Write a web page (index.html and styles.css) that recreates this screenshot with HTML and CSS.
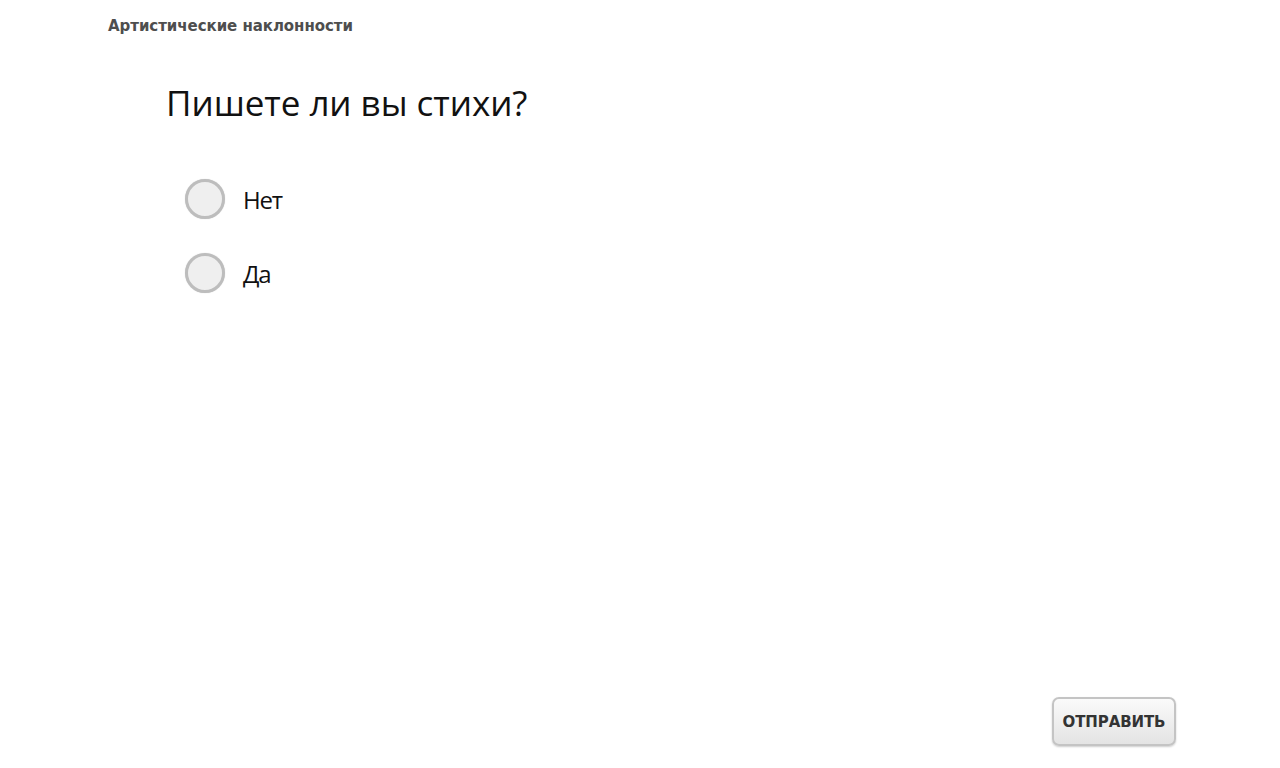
FILE: index.html
```html
<!DOCTYPE html>
<html lang="ru">
<head>
<meta charset="utf-8">
<link rel="stylesheet" href="styles.css">
</head>
<body>
<div class="page">
  <div class="section-title">Артистические наклонности</div>
  <div class="question">
    <h1 class="question-text">Пишете ли вы стихи?</h1>
    <div class="options">
      <label class="option"><span class="radio"></span><span class="option-text">Нет</span></label>
      <label class="option"><span class="radio"></span><span class="option-text">Да</span></label>
    </div>
  </div>
  <div class="footer">
    <button class="submit">ОТПРАВИТЬ</button>
  </div>
</div>
</body>
</html>
```
FILE: styles.css
```css
html, body {
  margin: 0;
  padding: 0;
  background: #fff;
}
.page {
  width: 1280px;
  height: 768px;
  display: flex;
  flex-direction: column;
  box-sizing: border-box;
  padding: 16px 104px 22px 108px;
}
.section-title {
  font-family: "DejaVu Sans", Verdana, sans-serif;
  font-weight: bold;
  font-size: 15px;
  letter-spacing: -0.05px;
  color: #4e4e4e;
  line-height: 20px;
}
.question {
  padding-left: 58px;
  padding-top: 45px;
}
.question-text {
  margin: 0;
  font-family: "Open Sans", sans-serif;
  font-weight: normal;
  font-size: 35px;
  letter-spacing: -0.05px;
  color: #111;
  line-height: 44px;
}
.options {
  display: flex;
  flex-direction: column;
  gap: 34px;
  padding-top: 54px;
  padding-left: 19px;
}
.option {
  display: flex;
  align-items: center;
  gap: 18px;
}
.radio {
  width: 34px;
  height: 34px;
  border-radius: 50%;
  border: 3px solid #bdbdbd;
  background: #efefef;
  box-shadow: 0 0 1px #ccc;
}
.option-text {
  font-family: "Open Sans", sans-serif;
  font-size: 24px;
  letter-spacing: -1.2px;
  color: #111;
}
.footer {
  margin-top: auto;
  display: flex;
  justify-content: flex-end;
}
.submit {
  width: 124px;
  height: 49px;
  border: 2px solid #c4c4c4;
  border-radius: 7px;
  background: linear-gradient(#fafafa, #e4e4e4);
  box-shadow: 0 1px 2px rgba(0,0,0,0.2);
  font-family: "DejaVu Sans", Verdana, sans-serif;
  font-weight: bold;
  font-size: 15px;
  letter-spacing: -0.1px;
  color: #333;
  padding: 0;
}
```
